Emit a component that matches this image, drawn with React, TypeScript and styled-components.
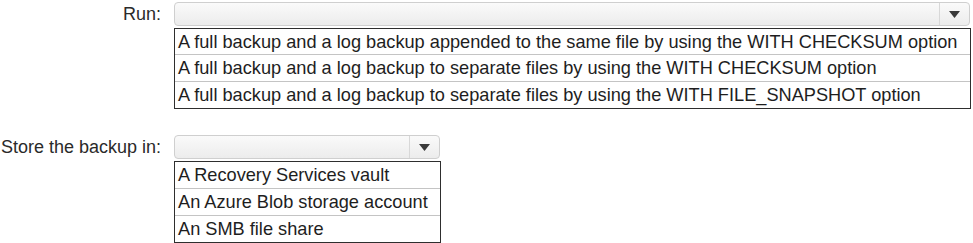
import React from 'react';
import styled, { createGlobalStyle } from 'styled-components';

const GlobalStyle = createGlobalStyle`
  body {
    margin: 0;
    background: #fff;
    font-family: 'Liberation Sans', Arial, sans-serif;
    color: #222;
  }
`;

type FieldProps = {
  label: string;
  width: number;
  rowHeight: number;
  options: string[];
};

const Field = ({ label, width, rowHeight, options }: FieldProps) => (
  <StyledField>
    <StyledLabel>{label}</StyledLabel>
    <StyledControl $width={width}>
      <StyledSelect>
        <StyledValue />
        <StyledArrow>
          <svg width="11" height="7" viewBox="0 0 11 7">
            <path d="M0 0 L11 0 L5.5 7 Z" fill="#3a3a3a" />
          </svg>
        </StyledArrow>
      </StyledSelect>
      <StyledList>
        {options.map((o) => (
          <StyledOption key={o} $rowHeight={rowHeight}>
            {o}
          </StyledOption>
        ))}
      </StyledList>
    </StyledControl>
  </StyledField>
);

const App = () => (
  <>
    <GlobalStyle />
    <StyledPage>
      <Field
        label="Run:"
        width={797}
        rowHeight={25}
        options={[
          'A full backup and a log backup appended to the same file by using the WITH CHECKSUM option',
          'A full backup and a log backup to separate files by using the WITH CHECKSUM option',
          'A full backup and a log backup to separate files by using the WITH FILE_SNAPSHOT option',
        ]}
      />
      <Field
        label="Store the backup in:"
        width={267}
        rowHeight={26}
        options={['A Recovery Services vault', 'An Azure Blob storage account', 'An SMB file share']}
      />
    </StyledPage>
  </>
);

export default App;

const StyledPage = styled.div`
  display: flex;
  flex-direction: column;
  gap: 26px;
  padding-top: 2px;
  width: 973px;
`;

const StyledField = styled.div`
  display: grid;
  grid-template-columns: 174px auto;
  align-items: start;
`;

const StyledLabel = styled.div`
  font-size: 18px;
  line-height: 24px;
  text-align: right;
  padding-right: 13px;
  white-space: nowrap;
  color: #2a2a2a;
`;

const StyledControl = styled.div<{ $width: number }>`
  display: flex;
  flex-direction: column;
  gap: 2px;
  width: ${({ $width }) => $width}px;
`;

const StyledSelect = styled.div`
  display: flex;
  height: 24px;
  margin-right: 1px;
  border: 1px solid #cfcfcf;
  border-radius: 4px;
  background: linear-gradient(#fafafa, #ececec);
  box-sizing: border-box;
`;

const StyledValue = styled.div`
  flex: 1;
`;

const StyledArrow = styled.div`
  width: 29px;
  display: flex;
  align-items: center;
  justify-content: center;
  border-left: 1px solid #d8d8d8;
`;

const StyledList = styled.div`
  display: flex;
  flex-direction: column;
  border: 1px solid #2e2e2e;
  background: #fff;
`;

const StyledOption = styled.div<{ $rowHeight: number }>`
  font-size: 18.2px;
  line-height: ${({ $rowHeight }) => $rowHeight - 1}px;
  height: ${({ $rowHeight }) => $rowHeight}px;
  padding: 1px 0 0 3px;
  box-sizing: border-box;
  white-space: nowrap;
  color: #1e1e1e;

  & + & {
    border-top: 1px solid #c4c4c4;
    height: ${({ $rowHeight }) => $rowHeight + 1}px;
  }
`;
